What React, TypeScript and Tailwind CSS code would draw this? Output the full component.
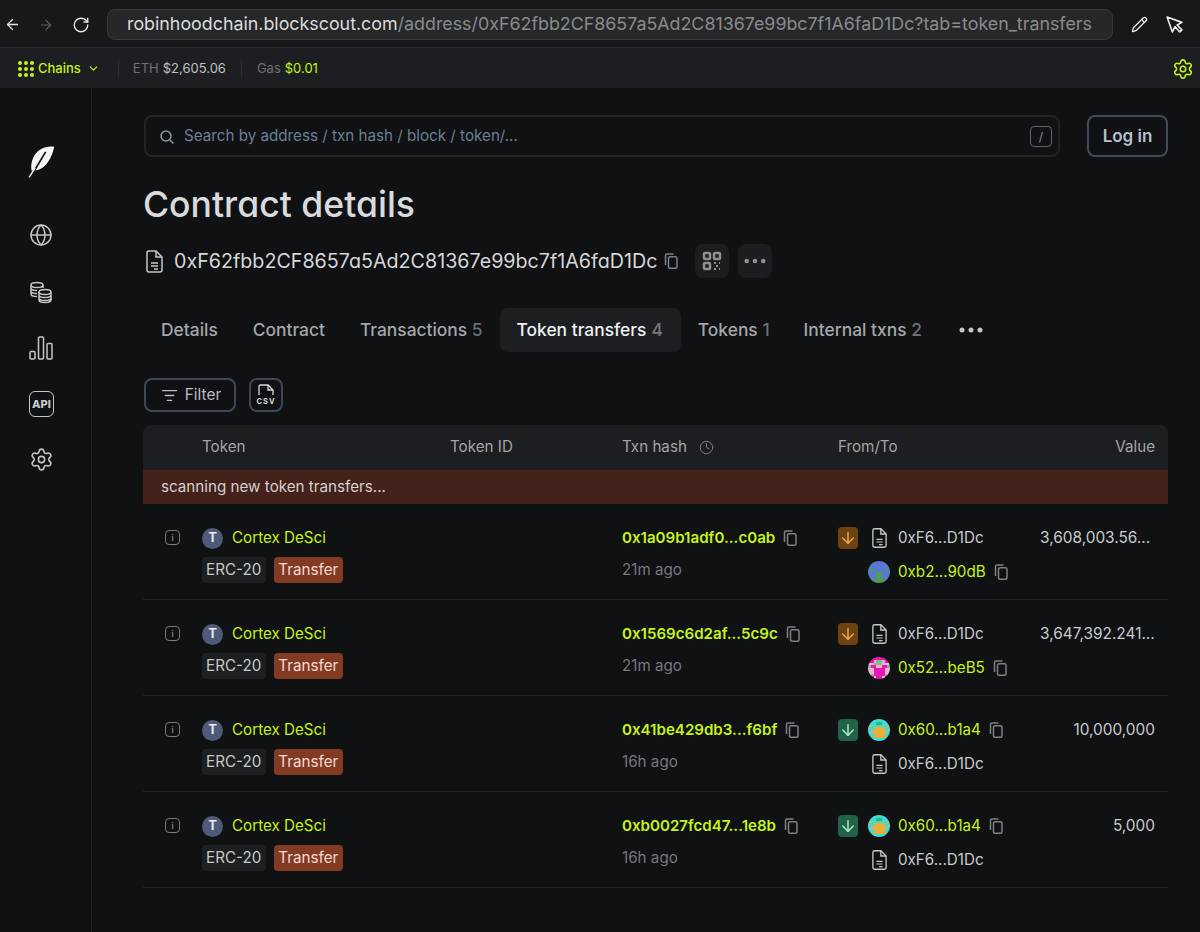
import { ArrowDown, ArrowLeft, ArrowRight, ChevronDown, Clock, Globe, ListFilter, Pencil, RotateCw, Settings } from 'lucide-react'

const LIME = 'text-[#c6f31a]'

function Feather() {
  return (
    <svg width="28" height="33" viewBox="27 15 84 100" fill="none">
      <path d="M106 20C82 16 54 28 43 52C37 65 35 78 37 92C55 94 74 86 86 68C97 52 103 36 106 20Z" fill="#f4f5f5" />
      <path d="M44 96L80 36" stroke="#0f1113" strokeWidth="5" />
      <path d="M30 113L48 84" stroke="#f4f5f5" strokeWidth="4.500" />
    </svg>
  )
}

function Coins() {
  return (
    <svg width="24" height="24" viewBox="0 0 24 24" fill="none" stroke="#c4c5c6" strokeWidth="1.500">
      <ellipse cx="8" cy="5" rx="6" ry="2.500" />
      <path d="M2 5v9c0 1.400 2.700 2.500 6 2.500M14 5v3M2 8c0 1.400 2.700 2.500 6 2.500M2 11c0 1.400 2.700 2.500 6 2.500" />
      <ellipse cx="16" cy="12" rx="6" ry="2.500" />
      <path d="M10 12v8c0 1.400 2.700 2.500 6 2.500s6-1.100 6-2.500v-8M10 15c0 1.400 2.700 2.500 6 2.500s6-1.100 6-2.500M10 18c0 1.400 2.700 2.500 6 2.500s6-1.100 6-2.500" />
    </svg>
  )
}

function Bars() {
  return (
    <svg width="24" height="24" viewBox="0 0 24 24" fill="none" stroke="#c4c5c6" strokeWidth="1.500">
      <rect x="1" y="15.500" width="5" height="7.500" rx="1" />
      <rect x="9.500" y="1" width="5" height="22" rx="1" />
      <rect x="18" y="7.500" width="5" height="15.500" rx="1" />
    </svg>
  )
}

function QrIcon() {
  return (
    <svg width="20" height="20" viewBox="0 0 20 20" fill="none" stroke="#8d8f91" strokeWidth="2.500">
      <rect x="2" y="2" width="6" height="6" rx="1" />
      <rect x="12" y="2" width="6" height="6" rx="1" />
      <rect x="2" y="12" width="6" height="6" rx="1" />
      <path d="M12 12h2M17 12h1M14 15h2M12 18h2M17 18h1" strokeWidth="2" />
    </svg>
  )
}

function CsvIcon() {
  return (
    <svg width="22" height="24" viewBox="0 0 22 24" fill="none" stroke="#d8d9da" strokeWidth="1.300">
      <path d="M4 12V3.500C4 2.700 4.700 2 5.500 2H13L18 7V12" />
      <path d="M13 2V7H18" />
      <text x="11" y="20.500" textAnchor="middle" fill="#d8d9da" stroke="none" fontSize="7.500" fontWeight="700" letterSpacing="1" fontFamily="Inter, sans-serif">CSV</text>
    </svg>
  )
}

function Dots({ width, color }: { width: number; color: string }) {
  return (
    <svg width={width} height="6" viewBox="0 0 24 6" fill={color}>
      <circle cx="3" cy="3" r="2.500" />
      <circle cx="12" cy="3" r="2.500" />
      <circle cx="21" cy="3" r="2.500" />
    </svg>
  )
}

function CursorIcon() {
  return (
    <svg width="17" height="17" viewBox="0 0 16 16" fill="none" stroke="#ececec" strokeWidth="1.500" strokeLinejoin="round">
      <path d="M1 1L6 15L8.500 10L13 15L15 13L10.500 8.500L15 6Z" />
    </svg>
  )
}

function CopyGlyph({ className = '' }: { className?: string }) {
  return (
    <svg width="14" height="16" viewBox="0 0 14 16" fill="none" stroke="#7f8183" strokeWidth="1.500" className={`shrink-0 ${className}`}>
      <path d="M1.500 12V2.500C1.500 1.700 2.100 1 3 1H9.500" />
      <rect x="4.500" y="3.800" width="8.500" height="11.400" rx="1.500" />
    </svg>
  )
}

function DocIcon({ width, height }: { width: number; height: number }) {
  return (
    <svg width={width} height={height} viewBox="0 0 17 23" fill="none" stroke="#c6c7c8" strokeWidth="1.500" className="shrink-0">
      <path d="M10 1H3C2 1 1 2 1 3V20C1 21 2 22 3 22H14C15 22 16 21 16 20V7Z" />
      <path d="M10 1V7H16" />
      <path d="M5 13H12M5 16H12M8 19H12" strokeWidth="1.300" />
    </svg>
  )
}

const palette: Record<string, string> = {
  b: '#5a77d6',
  g: '#4f9c54',
  m: '#ec14b4',
  p: '#eeb4d6',
  l: '#7cc07c',
  t: '#3fdcd8',
  o: '#e9ae3c',
  e: '#2eb872',
}

// pixel avatars, one letter per cell
function Identicon({ rows }: { rows: string[] }) {
  return (
    <svg width="22" height="22" viewBox="0 0 8 8" shapeRendering="crispEdges" className="rounded-full shrink-0">
      {rows.map((row, y) =>
        row.split('').map((c, x) => <rect key={`${x}-${y}`} x={x} y={y} width="1.050" height="1.050" fill={palette[c]} />)
      )}
    </svg>
  )
}

const avatars = {
  blue: <Identicon rows={['bbbbbbbb', 'bbbbbbbb', 'gbbbbbbg', 'bgbbbbgb', 'bbbggbbb', 'bbbggbbb', 'ggbggbgg', 'bbggggbb']} />,
  pink: <Identicon rows={['mmmmmmmm', 'mmpllpmm', 'pplllppp', 'lmmppmml', 'ppmmmmpp', 'ppmmmmpp', 'plmmmmlp', 'mmpmmpmm']} />,
  teal: <Identicon rows={['tttttttt', 'ttteettt', 'otttttto', 'ttoooott', 'toooooot', 'ttoooott', 'otooooto', 'tttttttt']} />,
}

type Transfer = {
  hash: string
  age: string
  direction: 'out' | 'in'
  peer: string
  avatar: React.ReactNode
  value: string
}

const transfers: Transfer[] = [
  { hash: '0x1a09b1adf0...c0ab', age: '21m ago', direction: 'out', peer: '0xb2...90dB', avatar: avatars.blue, value: '3,608,003.56...' },
  { hash: '0x1569c6d2af...5c9c', age: '21m ago', direction: 'out', peer: '0x52...beB5', avatar: avatars.pink, value: '3,647,392.241...' },
  { hash: '0x41be429db3...f6bf', age: '16h ago', direction: 'in', peer: '0x60...b1a4', avatar: avatars.teal, value: '10,000,000' },
  { hash: '0xb0027fcd47...1e8b', age: '16h ago', direction: 'in', peer: '0x60...b1a4', avatar: avatars.teal, value: '5,000' },
]

function AddressLine({ peer, avatar }: { peer: string; avatar: React.ReactNode }) {
  return (
    <div className="flex items-center h-[22px]">
      <div className="w-[22px] flex justify-center shrink-0">{avatar}</div>
      <span className={`ml-[8px] text-[15.200px] ${LIME}`}>{peer}</span>
      <CopyGlyph className="ml-[8px]" />
    </div>
  )
}

function SelfLine() {
  return (
    <div className="flex items-center h-[22px]">
      <div className="w-[22px] flex justify-center shrink-0"><DocIcon width={15} height={22} /></div>
      <span className="ml-[8px] text-[15.200px] text-[#c9cacb]">0xF6...D1Dc</span>
    </div>
  )
}

function Row({ t }: { t: Transfer }) {
  const out = t.direction === 'out'
  return (
    <div className="grid grid-cols-[59px_248px_172px_216px_202px_128px] h-[96px] border-b border-[#212327] pt-[23px]">
      <div className="pl-[22px] pt-[3px]">
        <div className="w-[15px] h-[15px] rounded-[4px] border border-[#77797b] flex items-center justify-center">
          <span className="text-[9px] leading-none text-[#a5a6a8]">i</span>
        </div>
      </div>
      <div>
        <div className="flex items-center h-[22px]">
          <span className="w-[21px] h-[21px] rounded-full bg-[#4e5a78] flex items-center justify-center text-[13px] font-bold text-[#e8eaee]">T</span>
          <span className={`ml-[9px] text-[15.200px] ${LIME}`}>Cortex DeSci</span>
        </div>
        <div className="flex items-center gap-[8px] mt-[8px] -ml-[0.500px]">
          <span className="h-[26px] px-[4.500px] rounded-[4px] bg-[#1d1f22] text-[15.200px] leading-[26px] text-[#c7c8c9]">ERC-20</span>
          <span className="h-[26px] px-[4.500px] rounded-[4px] bg-[#823a22] text-[15.200px] leading-[26px] text-[#f2dccf]">Transfer</span>
        </div>
      </div>
      <div />
      <div>
        <div className="flex items-center h-[22px]">
          <span className={`text-[15.100px] font-semibold ${LIME}`}>{t.hash}</span>
          <CopyGlyph className="ml-[8px]" />
        </div>
        <div className="mt-[10px] text-[15.200px] text-[#76787a]">{t.age}</div>
      </div>
      <div className="flex">
        <div className="w-[30px] shrink-0">
          <div className={`w-[20px] h-[22px] rounded-[4px] flex items-center justify-center ${out ? 'bg-[#6e4314]' : 'bg-[#22624a]'}`}>
            <ArrowDown className={`w-[18px] h-[18px] ${out ? 'text-[#f0aa45]' : 'text-[#a9eecb]'}`} strokeWidth={2} />
          </div>
        </div>
        <div className="flex flex-col gap-[12px]">
          {out ? <SelfLine /> : <AddressLine peer={t.peer} avatar={t.avatar} />}
          {out ? <AddressLine peer={t.peer} avatar={t.avatar} /> : <SelfLine />}
        </div>
      </div>
      <div className={`pr-[13px] text-[15.400px] leading-[22px] text-[#c9cacb] whitespace-nowrap ${t.value.endsWith('...') ? 'text-left' : 'text-right'}`}>{t.value}</div>
    </div>
  )
}

export default function App() {
  return (
    <div className="w-[1200px] h-[932px] overflow-hidden bg-[#0f1113] text-[#e6e7e8] font-['Inter',sans-serif] flex flex-col">
      {/* browser chrome */}
      <div className="h-[48px] shrink-0 bg-[#171819] border-b border-[#2b2c2e] flex items-center pt-[2px]">
        <ArrowLeft className="ml-[4px] w-[17px] h-[17px] text-[#e4e4e4]" strokeWidth={1.800} />
        <ArrowRight className="ml-[17px] w-[16px] h-[16px] text-[#5f6061]" strokeWidth={1.800} />
        <RotateCw className="ml-[18px] w-[18px] h-[18px] text-[#e4e4e4]" strokeWidth={1.800} />
        <div className="ml-[17px] w-[1006px] h-[31px] rounded-[8px] border border-[#38393a] bg-[#262728] pl-[19px] flex items-center text-[17.830px] whitespace-nowrap overflow-hidden">
          <span className="text-[#dcdcdc]">robinhoodchain.blockscout.com</span>
          <span className="text-[#8a8b8c]">/address/0xF62fbb2CF8657a5Ad2C81367e99bc7f1A6faD1Dc?tab=token_transfers</span>
        </div>
        <Pencil className="ml-[18px] w-[17px] h-[17px] text-[#ececec]" strokeWidth={1.800} />
        <div className="ml-[18px]"><CursorIcon /></div>
      </div>

      {/* stats bar */}
      <div className="h-[40px] shrink-0 bg-[#1c1e22] flex items-center pl-[18px] pr-[6px] pt-[1px] text-[13px]">
        <svg width="16" height="16" viewBox="0 0 16 16" fill="#c6f31a">
          {[2, 8, 14].flatMap((y) => [2, 8, 14].map((x) => <circle key={`${x}${y}`} cx={x} cy={y} r="2" />))}
        </svg>
        <span className={`ml-[4px] font-medium ${LIME}`}>Chains</span>
        <ChevronDown className={`ml-[6px] w-[13px] h-[13px] ${LIME}`} strokeWidth={2.200} />
        <div className="ml-[18px] w-px h-[16px] bg-[#2b2d31]" />
        <span className="ml-[14px] text-[#6f7174]">ETH</span>
        <span className="ml-[4px] text-[#bfc0c1]">$2,605.06</span>
        <div className="ml-[15px] w-px h-[16px] bg-[#2b2d31]" />
        <span className="ml-[15px] text-[#6f7174]">Gas</span>
        <span className={`ml-[4px] ${LIME}`}>$0.01</span>
        <Settings className={`ml-auto w-[22px] h-[22px] ${LIME}`} strokeWidth={1.700} />
      </div>

      <div className="flex-1 flex min-h-0">
        {/* sidebar */}
        <aside className="w-[92px] shrink-0 border-r border-[#202226] flex flex-col items-center pr-[9px]">
          <div className="mt-[57px] ml-[1px]"><Feather /></div>
          <Globe className="mt-[45px] w-[24px] h-[24px] text-[#c4c5c6]" strokeWidth={1.500} />
          <div className="mt-[33px] h-[24px]"><Coins /></div>
          <div className="mt-[32px] h-[24px]"><Bars /></div>
          <div className="mt-[31px] ml-[1px] w-[25px] h-[26px] rounded-[6px] border-[1.500px] border-[#c4c5c6] flex items-center justify-center text-[11px] font-extrabold text-[#c9cacb]">API</div>
          <Settings className="mt-[30px] w-[25px] h-[25px] text-[#c4c5c6]" strokeWidth={1.500} />
        </aside>

        <main className="flex-1 min-w-0 pl-[51px] pr-[32px]">
          {/* search */}
          <div className="flex gap-[27px] mt-[27px] pl-[1px]">
            <div className="flex-1 h-[42px] rounded-[8px] border-2 border-[#1f2226] flex items-center pl-[13px] pr-[6px] pt-[1px] text-[15.200px] text-[#6e7f93]">
              <svg width="16" height="16" viewBox="0 0 16 16" fill="none" stroke="#8c99a8" strokeWidth="1.500"><circle cx="7" cy="7" r="5" /><path d="M11 11l3.500 3.500" /></svg>
              <span className="ml-[9px]">Search by address / txn hash / block / token/...</span>
              <span className="ml-auto w-[22px] h-[21px] rounded-[4px] border border-[#5c6672] flex items-center justify-center text-[12px] text-[#8b95a1]">/</span>
            </div>
            <button className="w-[81px] h-[42px] pt-[1px] rounded-[8px] border-2 border-[#3f4a5c] text-[17px] font-semibold text-[#b7c0cf]">Log in</button>
          </div>

          <h1 className="mt-[24px] text-[35.600px] leading-[48px] font-medium text-[#d9dadb] [font-feature-settings:'cv11']">Contract details</h1>

          {/* address */}
          <div className="flex items-center mt-[14px] h-[36px] pl-[3px]">
            <DocIcon width={17} height={23} />
            <span className="ml-[11px] pt-[2px] text-[19.700px] text-[#d6d7d8] [font-feature-settings:'cv11']">0xF62fbb2CF8657a5Ad2C81367e99bc7f1A6faD1Dc</span>
            <CopyGlyph className="ml-[6px]" />
            <span className="ml-[17px] w-[34px] h-[34px] rounded-[8px] bg-[#1b1d20] flex items-center justify-center"><QrIcon /></span>
            <span className="ml-[9px] w-[34px] h-[34px] rounded-[8px] bg-[#1b1d20] flex items-center justify-center"><Dots width={22} color="#8d8f91" /></span>
          </div>

          {/* tabs */}
          <nav className="flex items-center mt-[29px] h-[44px] text-[17.400px] font-medium text-[#a5a6a7] whitespace-nowrap">
            <span className="ml-[18px]">Details</span>
            <span className="ml-[35px]">Contract</span>
            <span className="ml-[35px]">Transactions <span className="text-[#6f7072]">5</span></span>
            <span className="ml-[17px] h-[44px] pl-[17px] pr-[18px] rounded-[8px] bg-[#1c1e21] flex items-center gap-[5px] text-[#eeeff0]">Token transfers <span className="text-[#77797b]">4</span></span>
            <span className="ml-[17px]">Tokens <span className="text-[#6f7072]">1</span></span>
            <span className="ml-[34px]">Internal txns <span className="text-[#6f7072]">2</span></span>
            <span className="ml-[37px]"><Dots width={24} color="#c4c5c6" /></span>
          </nav>

          {/* actions */}
          <div className="flex gap-[13px] mt-[26px] pl-[1px]">
            <button className="w-[92px] h-[34px] rounded-[8px] border-2 border-[#3c4757] flex items-center justify-center gap-[7px] pl-[2px] text-[15.400px] text-[#b9bcc1]">
              <ListFilter className="w-[17px] h-[17px]" strokeWidth={1.800} />
              Filter
            </button>
            <button className="w-[34px] h-[34px] rounded-[8px] border-2 border-[#3c4757] flex items-center justify-center"><CsvIcon /></button>
          </div>

          {/* table */}
          <div className="mt-[13px]">
            <div className="grid grid-cols-[59px_248px_172px_216px_202px_128px] h-[45px] items-center rounded-t-[8px] bg-[#1c1e21] text-[15.200px] text-[#a4a5a6]">
              <div />
              <div>Token</div>
              <div>Token ID</div>
              <div className="flex items-center gap-[12px]">Txn hash <Clock className="w-[15px] h-[15px] text-[#7f8183]" strokeWidth={1.500} /></div>
              <div>From/To</div>
              <div className="text-right pr-[13px]">Value</div>
            </div>
            <div className="h-[34px] bg-[#42221a] pl-[18px] flex items-center text-[15.200px] text-[#d6cfcb]">scanning new token transfers...</div>
            {transfers.map((t) => <Row key={t.hash} t={t} />)}
          </div>
        </main>
      </div>
    </div>
  )
}
